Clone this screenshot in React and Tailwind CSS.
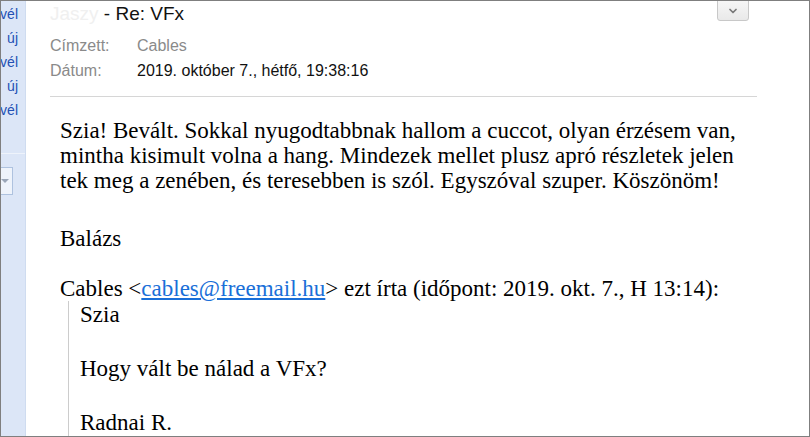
import { ChevronDown } from "lucide-react";

const SIDE_ITEMS = ["vél", "új", "vél", "új", "vél"];

const BODY_LINES = [
  "Szia! Bevált. Sokkal nyugodtabbnak hallom a cuccot, olyan érzésem van,",
  "mintha kisimult volna a hang. Mindezek mellet plusz apró részletek jelen",
  "tek meg a zenében, és teresebben is szól. Egyszóval szuper. Köszönöm!",
];

function Sidebar() {
  return (
    <div className="w-[25px] shrink-0 bg-[#dce6f7] border-r border-[#cfdcf0] flex flex-col overflow-hidden font-['Liberation_Sans',Arial,sans-serif]">
      <div className="flex flex-col pt-[3px]">
        {SIDE_ITEMS.map((item, i) => (
          <div
            key={i}
            className="h-[24px] leading-[20px] text-[14px] text-[#2350b4] whitespace-nowrap flex justify-end pr-[7px]"
          >
            {item}
          </div>
        ))}
      </div>
      <div className="mt-[29px] border-t border-[#eef3fb]" />
      <div className="mt-[13px] w-[12px] h-[28px] bg-[#eef3fb] border border-l-0 border-[#aec2df] flex items-center justify-center">
        <span className="block w-0 h-0 border-l-[4px] border-r-[4px] border-t-[4px] border-l-transparent border-r-transparent border-t-[#9aa6b8] -ml-[3px]" />
      </div>
    </div>
  );
}

function Header() {
  return (
    <div className="relative pl-[24px] pr-[52px] font-['Liberation_Sans',Arial,sans-serif]">
      <div className="text-[19px] leading-[22px] pt-[2px] text-[#111]">
        <span className="text-[#f0f0f0]">Jaszy</span> - Re: VFx
      </div>
      <button className="absolute left-[691px] top-[-1px] w-[32px] h-[21px] rounded-b-[3px] border border-[#c8c8c8] bg-gradient-to-b from-[#f6f6f6] to-[#e9e9e9] flex items-center justify-center">
        <ChevronDown size={12} strokeWidth={3.5} className="text-[#7a7a7a]" />
      </button>
      <div className="mt-[8px] flex text-[16px] leading-[25px]">
        <div className="w-[87px] text-[#8a8a8a]">Címzett:</div>
        <div className="text-[#8a8a8a]">Cables</div>
      </div>
      <div className="flex text-[16px] leading-[25px]">
        <div className="w-[87px] text-[#8a8a8a]">Dátum:</div>
        <div className="text-[#111]">2019. október 7., hétfő, 19:38:16</div>
      </div>
      <div className="mt-[13px] border-t border-[#d6d6d6]" />
    </div>
  );
}

function Body() {
  return (
    <div className="pl-[34px] pt-[21px] font-['Liberation_Serif','Times_New_Roman',serif] text-[23px] text-black">
      <div className="leading-[25px]">
        {BODY_LINES.map((l, i) => (
          <div key={i} className="whitespace-nowrap">{l}</div>
        ))}
      </div>
      <div className="mt-[33px] leading-[25px]">Balázs</div>
      <div className="mt-[25px] leading-[25px] whitespace-nowrap">
        Cables &lt;<a href="#" className="text-[#1a6fd8] underline">cables@freemail.hu</a>&gt; ezt írta (időpont: 2019. okt. 7., H 13:14):
      </div>
      <div className="ml-[8px] border-l border-[#cccccc] pl-[11px] leading-[27px]">
        <div>Szia</div>
        <div className="h-[27px]" />
        <div>Hogy vált be nálad a VFx?</div>
        <div className="h-[27px]" />
        <div>Radnai R.</div>
        <div className="h-[40px]" />
      </div>
    </div>
  );
}

export default function App() {
  return (
    <div className="w-[810px] h-[437px] border border-[#7f7f7f] flex overflow-hidden bg-white">
      <Sidebar />
      <div className="flex-1 min-w-0 overflow-hidden">
        <Header />
        <Body />
      </div>
    </div>
  );
}
